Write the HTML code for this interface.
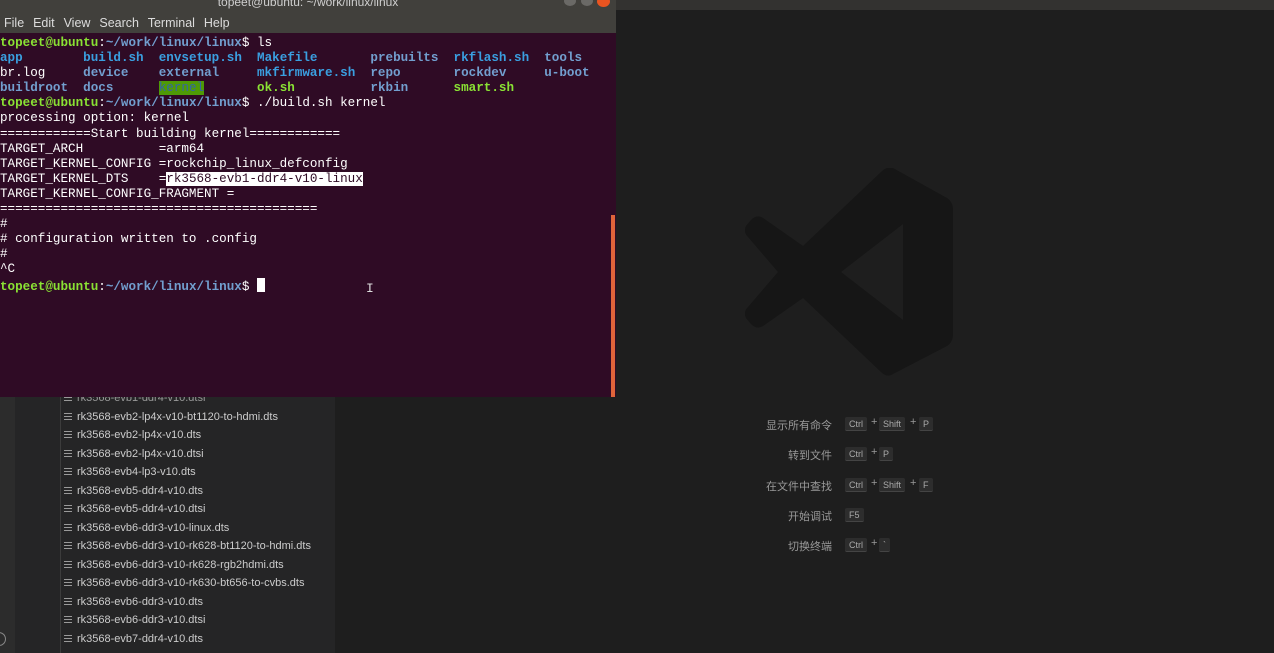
<!DOCTYPE html>
<html><head><meta charset="utf-8"><style>
*{margin:0;padding:0;box-sizing:border-box}
html,body{width:1274px;height:653px;overflow:hidden;background:#1e1e1e;font-family:"Liberation Sans","Noto Sans CJK SC",sans-serif}
.top{position:absolute;left:0;top:0;width:1274px;height:10px;background:#333230}
.act{position:absolute;left:0;top:397px;width:15px;height:256px;background:#2c2c2c}
.side{position:absolute;left:15px;top:397px;width:320px;height:256px;background:#252526}
.guide{position:absolute;left:60px;top:397px;width:1px;height:256px;background:#3c3c3c}
.file{position:absolute;left:64px;font-size:11px;color:#cccccc;white-space:nowrap;height:16px;line-height:16px}
.file i{display:inline-block;width:8px;height:7px;margin-right:5px;vertical-align:0px;background:repeating-linear-gradient(#9a9a9a 0 1px,transparent 1px 3px)}
.term{position:absolute;left:0;top:0;width:616px;height:397px;background:#2f0b25}
.tbar{position:absolute;left:0;top:0;width:616px;height:33px;background:#41403c}
.title{position:absolute;left:0;width:616px;top:-5px;text-align:center;color:#cfcfcf;font-size:12px}
.menu{position:absolute;left:4px;top:16px;font-size:12.5px;color:#dcdcdc;word-spacing:1px}
.pre{position:absolute;left:0;top:36px;font-family:"Liberation Mono",monospace;font-size:12.6px;line-height:15.1px;color:#ffffff;white-space:pre}
.g{color:#8ae234;font-weight:bold}.b{color:#729fcf;font-weight:bold}.c{color:#3a9fe0;font-weight:bold}
.k{background:#4e9a06;color:#3465a4}
.sel{background:#fff;color:#2f0b25}
.sb{position:absolute;left:611px;top:215px;width:4px;height:182px;background:#e0643a}
.cur{display:inline-block;width:8px;height:14px;background:#fff;vertical-align:-2px}
.lab{position:absolute;width:200px;left:632px;text-align:right;font-size:11px;color:#999}
.key{position:absolute;font-size:9px;color:#aaa;background:#2d2d2d;border-bottom:1px solid #444;padding:0 4px;height:14px;line-height:14px;border-radius:2px}
.plus{position:absolute;font-size:11px;color:#999}
</style></head><body>
<div class="top"></div>
<div class="act"></div>
<div class="side"></div>
<div class="guide"></div>
<div style="position:absolute;left:-8px;top:632px;width:14px;height:14px;border:1px solid #888;border-radius:50%"></div>
<div class="file" style="top:390px;color:#999"><i></i>rk3568-evb1-ddr4-v10.dtsi</div>
<div class="file" style="top:409px"><i></i>rk3568-evb2-lp4x-v10-bt1120-to-hdmi.dts</div>
<div class="file" style="top:427px"><i></i>rk3568-evb2-lp4x-v10.dts</div>
<div class="file" style="top:446px"><i></i>rk3568-evb2-lp4x-v10.dtsi</div>
<div class="file" style="top:464px"><i></i>rk3568-evb4-lp3-v10.dts</div>
<div class="file" style="top:483px"><i></i>rk3568-evb5-ddr4-v10.dts</div>
<div class="file" style="top:501px"><i></i>rk3568-evb5-ddr4-v10.dtsi</div>
<div class="file" style="top:520px"><i></i>rk3568-evb6-ddr3-v10-linux.dts</div>
<div class="file" style="top:538px"><i></i>rk3568-evb6-ddr3-v10-rk628-bt1120-to-hdmi.dts</div>
<div class="file" style="top:557px"><i></i>rk3568-evb6-ddr3-v10-rk628-rgb2hdmi.dts</div>
<div class="file" style="top:575px"><i></i>rk3568-evb6-ddr3-v10-rk630-bt656-to-cvbs.dts</div>
<div class="file" style="top:594px"><i></i>rk3568-evb6-ddr3-v10.dts</div>
<div class="file" style="top:612px"><i></i>rk3568-evb6-ddr3-v10.dtsi</div>
<div class="file" style="top:631px"><i></i>rk3568-evb7-ddr4-v10.dts</div>

<svg style="position:absolute;left:745px;top:168px" width="210" height="208" viewBox="0 0 210 208">
<path fill="#161616" d="M148 0 Q142 -2 136 4 L58 78 L18 50 Q12 46 6 52 L1 58 Q-2 64 3 69 L33 104 L3 139 Q-2 144 1 150 L6 156 Q12 162 18 158 L58 130 L136 204 Q142 210 148 206 L202 178 Q208 174 208 166 L208 42 Q208 34 202 30 Z M158 56 L158 152 L96 104 Z"/>
</svg>

<div class="lab" style="top:417px">显示所有命令</div>
<div class="key" style="left:845px;top:417px">Ctrl</div><div class="plus" style="left:871px;top:416px">+</div>
<div class="key" style="left:879px;top:417px">Shift</div><div class="plus" style="left:910px;top:416px">+</div>
<div class="key" style="left:919px;top:417px">P</div>
<div class="lab" style="top:447px">转到文件</div>
<div class="key" style="left:845px;top:447px">Ctrl</div><div class="plus" style="left:871px;top:446px">+</div>
<div class="key" style="left:879px;top:447px">P</div>
<div class="lab" style="top:478px">在文件中查找</div>
<div class="key" style="left:845px;top:478px">Ctrl</div><div class="plus" style="left:871px;top:477px">+</div>
<div class="key" style="left:879px;top:478px">Shift</div><div class="plus" style="left:910px;top:477px">+</div>
<div class="key" style="left:919px;top:478px">F</div>
<div class="lab" style="top:508px">开始调试</div>
<div class="key" style="left:845px;top:508px">F5</div>
<div class="lab" style="top:538px">切换终端</div>
<div class="key" style="left:845px;top:538px">Ctrl</div><div class="plus" style="left:871px;top:537px">+</div>
<div class="key" style="left:879px;top:538px">`</div>

<div class="term">
<div class="tbar"><div class="title">topeet@ubuntu: ~/work/linux/linux</div>
<div class="menu">File&nbsp; Edit&nbsp; View&nbsp; Search&nbsp; Terminal&nbsp; Help</div>
<div style="position:absolute;left:564px;top:-4px;width:12px;height:10px;border-radius:50%;background:#6a6966"></div>
<div style="position:absolute;left:581px;top:-4px;width:12px;height:10px;border-radius:50%;background:#6a6966"></div>
<div style="position:absolute;left:597px;top:-4px;width:13px;height:11px;border-radius:50%;background:#e95420"></div>
</div>
<div class="pre"><span class="g">topeet@ubuntu</span>:<span class="b">~/work/linux/linux</span>$ ls
<span class="c">app</span>        <span class="c">build.sh</span>  <span class="c">envsetup.sh</span>  <span class="c">Makefile</span>       <span class="b">prebuilts</span>  <span class="c">rkflash.sh</span>  <span class="b">tools</span>
br.log     <span class="b">device</span>    <span class="b">external</span>     <span class="c">mkfirmware.sh</span>  <span class="b">repo</span>       <span class="b">rockdev</span>     <span class="b">u-boot</span>
<span class="b">buildroot</span>  <span class="b">docs</span>      <span class="k">kernel</span>       <span class="g">ok.sh</span>          <span class="b">rkbin</span>      <span class="g">smart.sh</span>
<span class="g">topeet@ubuntu</span>:<span class="b">~/work/linux/linux</span>$ ./build.sh kernel
processing option: kernel
============Start building kernel============
TARGET_ARCH          =arm64
TARGET_KERNEL_CONFIG =rockchip_linux_defconfig
TARGET_KERNEL_DTS    =<span class="sel">rk3568-evb1-ddr4-v10-linux</span>
TARGET_KERNEL_CONFIG_FRAGMENT =
==========================================
#
# configuration written to .config
#
^C
<span class="g">topeet@ubuntu</span>:<span class="b">~/work/linux/linux</span>$ <span class="cur"></span></div>
<div class="sb"></div>
<div style="position:absolute;left:366px;top:281px;color:#ddd;font-family:'Liberation Mono',monospace;font-size:13px">I</div>
</div>
</body></html>
